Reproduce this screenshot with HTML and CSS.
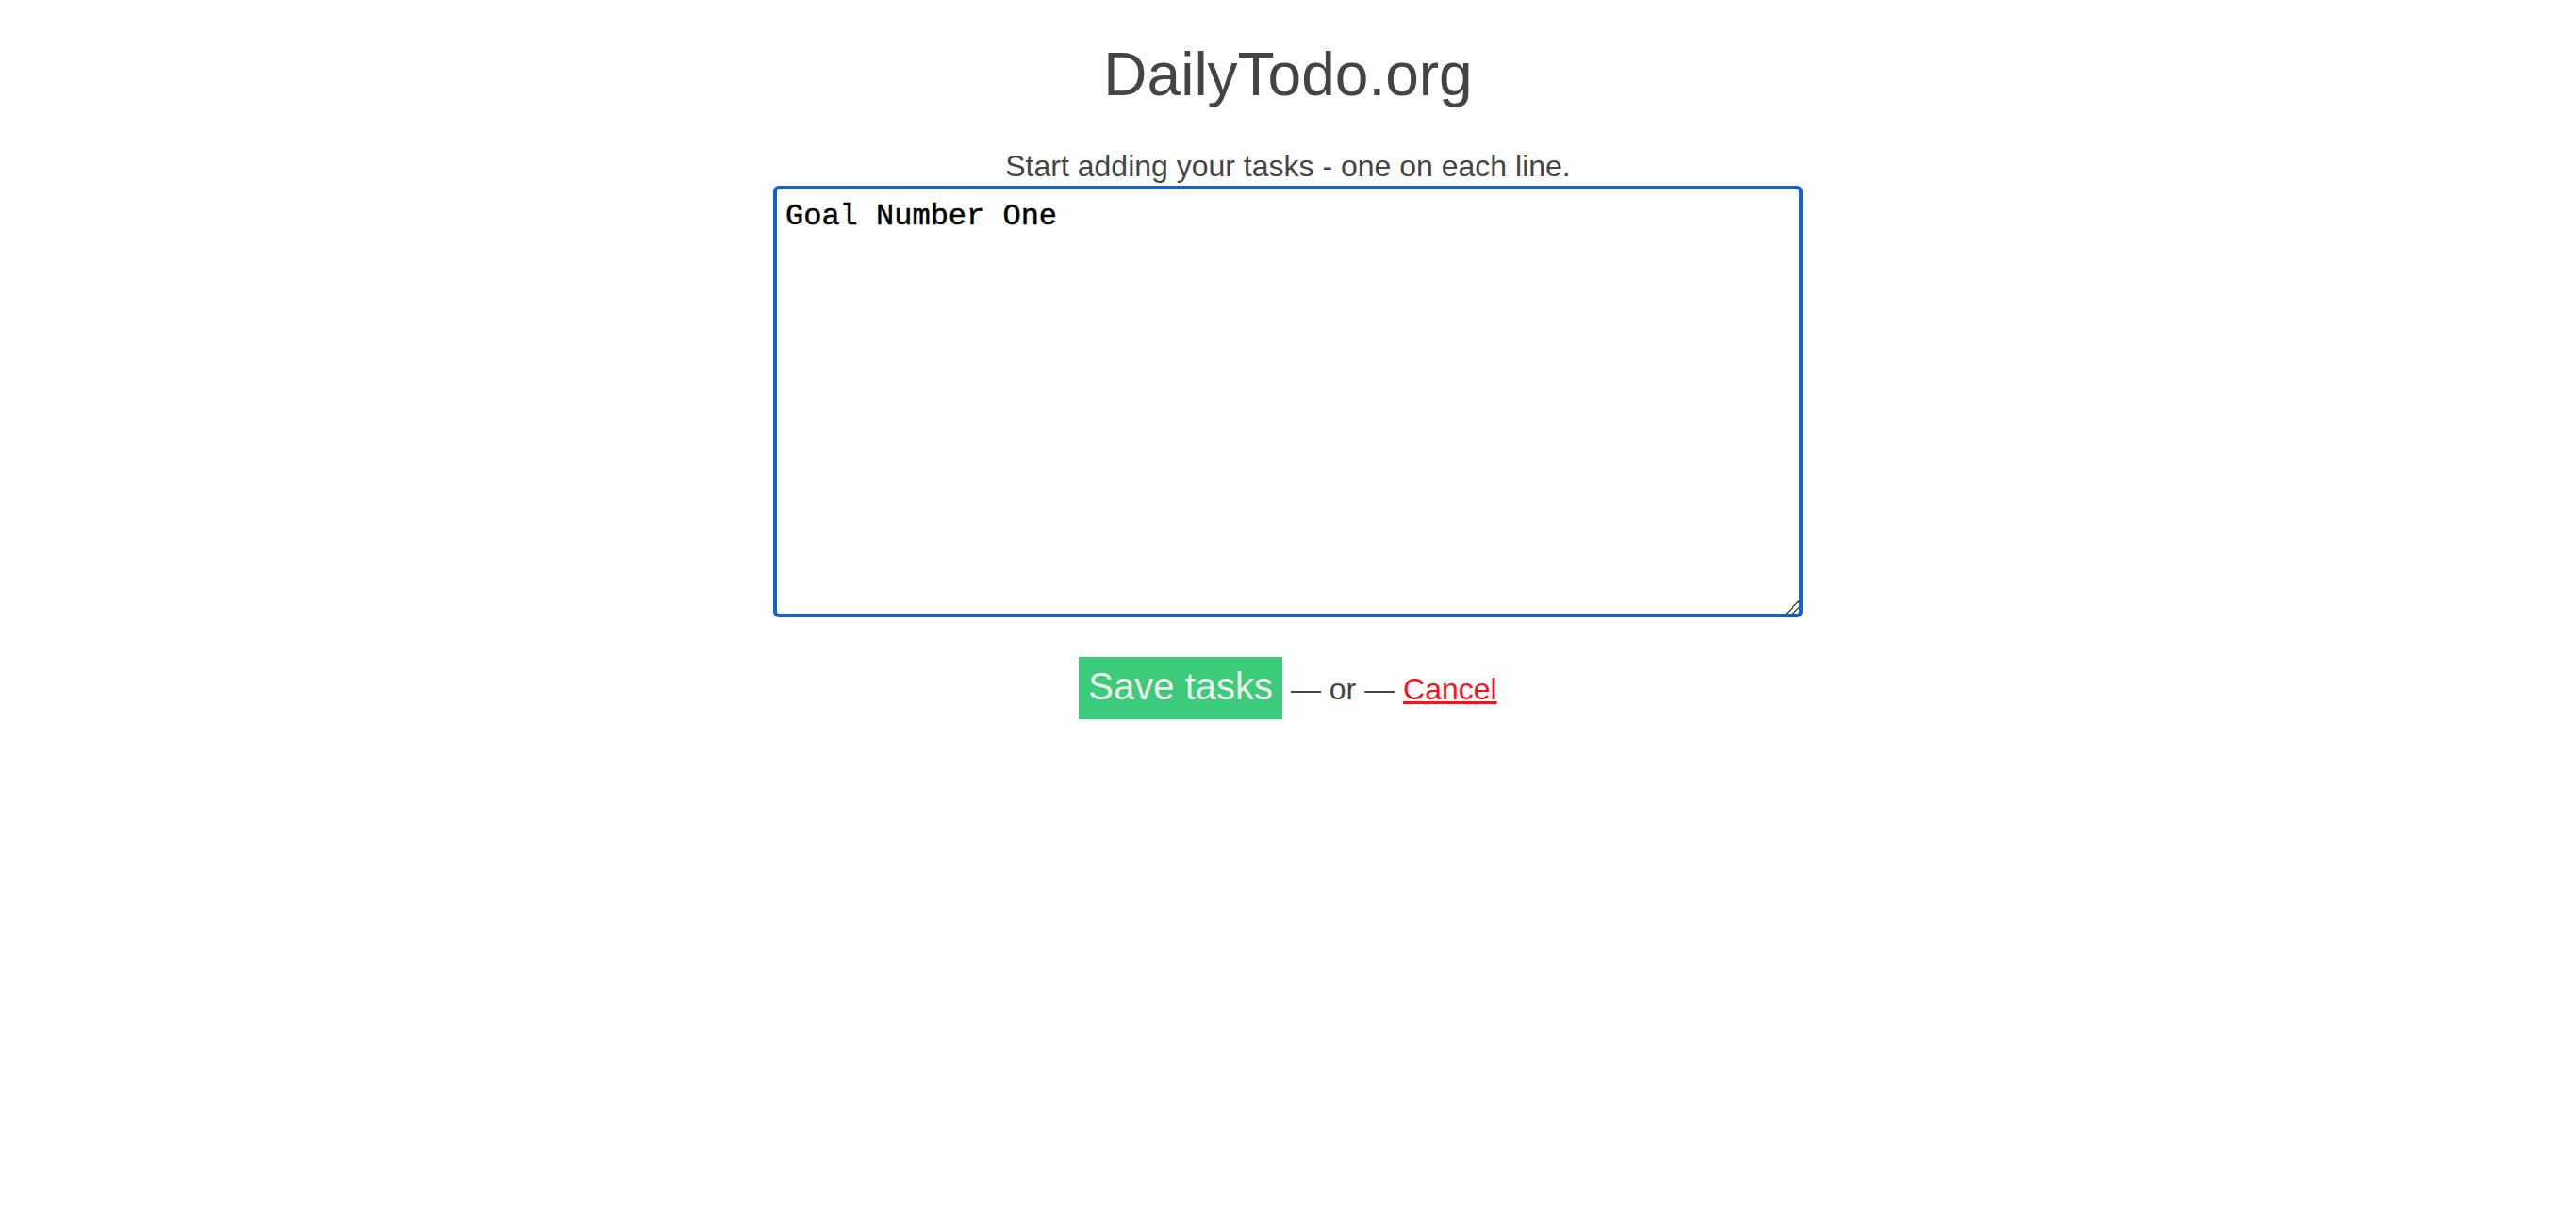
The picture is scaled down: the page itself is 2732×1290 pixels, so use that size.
FILE: index.html
```html
<!DOCTYPE html>
<html lang="en">
<head>
<meta charset="utf-8">
<title>DailyTodo.org</title>
<link rel="stylesheet" href="styles.css">
</head>
<body>
<main class="page">
  <h1 class="title">DailyTodo.org</h1>
  <form class="task-form">
    <label class="hint" for="tasks">Start adding your tasks - one on each line.</label>
    <textarea id="tasks" class="tasks" spellcheck="false">Goal Number One</textarea>
    <div class="actions">
      <button type="button" class="save">Save tasks</button> — or — <a href="#" class="cancel">Cancel</a>
    </div>
  </form>
</main>
</body>
</html>
```

FILE: styles.css
```css
html, body {
  margin: 0;
  padding: 0;
  background: #fff;
}

body {
  font-family: "Liberation Sans", Arial, Helvetica, sans-serif;
  color: #444;
}

.page {
  display: flex;
  flex-direction: column;
  align-items: center;
  text-align: center;
}

.title {
  margin: 42px 0 0;
  font-size: 64px;
  line-height: 74px;
  font-weight: normal;
  color: #444;
}

.task-form {
  display: flex;
  flex-direction: column;
  align-items: center;
  margin-top: 42px;
}

.hint {
  display: block;
  font-size: 32px;
  line-height: 37px;
  color: #444;
}

.tasks {
  box-sizing: border-box;
  width: 1092px;
  height: 458px;
  margin-top: 2px;
  padding: 11px 7px 7px 9px;
  border: 4px solid #1262cc;
  border-radius: 6px;
  outline: none;
  background: #fff;
  color: #000;
  font-family: "Courier New", "Nimbus Mono PS", "FreeMono", "Liberation Mono", monospace;
  font-size: 32px;
  font-weight: 500;
  line-height: 36px;
  -webkit-text-stroke: 0.5px #000;
  resize: both;
}

.tasks::-webkit-resizer {
  width: 16px;
  height: 16px;
  background:
    linear-gradient(135deg,
      transparent 0 52%,
      #555 52% 60%,
      transparent 60% 74%,
      #555 74% 82%,
      transparent 82% 100%);
}

.actions {
  margin-top: 42px;
  font-size: 32px;
  line-height: 37px;
  color: #444;
}

.save {
  display: inline-block;
  margin: 0;
  padding: 8px 10px 12px;
  border: none;
  border-radius: 0;
  background: #3ccb7a;
  color: #eeeeee;
  font-family: "Liberation Sans", Arial, Helvetica, sans-serif;
  font-size: 40px;
  line-height: 46px;
  cursor: pointer;
}

.cancel {
  color: #ff0d1a;
  text-decoration: underline;
}
```
